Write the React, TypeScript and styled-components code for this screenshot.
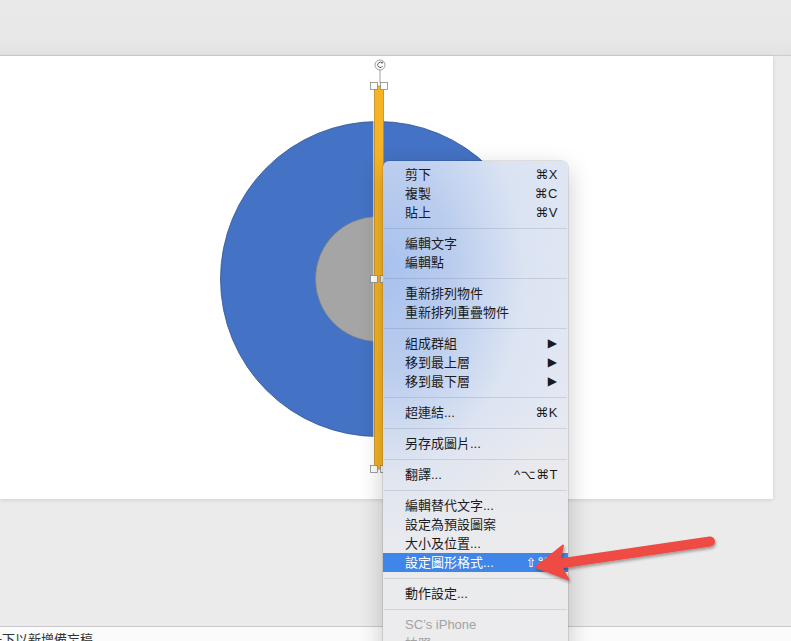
import styled, { createGlobalStyle } from 'styled-components';

const GlobalStyle = createGlobalStyle`
  html, body {
    margin: 0;
    padding: 0;
    width: 791px;
    height: 641px;
    overflow: hidden;
    background: #ebebeb;
    font-family: "Liberation Sans", "Noto Sans CJK TC", sans-serif;
  }
`;

const Page = styled.div`
  position: relative;
  width: 791px;
  height: 641px;
  display: flex;
  flex-direction: column;
  overflow: hidden;
`;

const TopBar = styled.div`
  flex: 0 0 56px;
  box-sizing: border-box;
  background: linear-gradient(180deg, #e9e9e9 0%, #e8e8e8 70%, #e2e2e2 100%);
  border-bottom: 1px solid #cdcdcd;
`;

const Workspace = styled.div`
  flex: 0 0 570px;
  background: #ebebeb;
  display: flex;
  align-items: flex-start;
`;

const Slide = styled.div`
  position: relative;
  width: 773px;
  height: 443px;
  background: #ffffff;
  box-shadow: 0 1px 4px rgba(0, 0, 0, 0.12);
`;

const Canvas = styled.svg`
  position: absolute;
  left: 0;
  top: 0;
  overflow: visible;
`;

const Notes = styled.div`
  flex: 0 0 15px;
  box-sizing: border-box;
  border-top: 1px solid #c9c9c9;
  background: #fbfbfb;
  padding: 5px 0 0;
  font-size: 13px;
  line-height: 16px;
  color: #333;
  margin-left: -24px;
  overflow: hidden;
  white-space: nowrap;
`;

// frosted menu: tint from the blue shape lying under its upper-left part
const Menu = styled.div`
  position: absolute;
  left: 383px;
  top: 161px;
  width: 185px;
  height: 500px;
  box-sizing: border-box;
  padding-top: 4px;
  border-radius: 6px;
  background:
    radial-gradient(ellipse 200px 290px at 0px 110px,
      rgba(168, 193, 237, 1) 0%,
      rgba(182, 202, 238, 0.9) 35%,
      rgba(214, 224, 242, 0.5) 70%,
      rgba(230, 234, 242, 0) 100%),
    linear-gradient(180deg, #dfe6f3 0px, #e3e8f2 240px, #e9eaee 300px, #ececed 100%);
  box-shadow: 0 0 0 0.5px rgba(0, 0, 0, 0.18), 0 8px 24px rgba(0, 0, 0, 0.22);
`;

const Row = styled.div<{ $active?: boolean; $disabled?: boolean }>`
  height: 19px;
  display: flex;
  align-items: center;
  padding: 0 10px 0 22px;
  font-size: 13px;
  line-height: 19px;
  color: ${(p) => (p.$active ? '#ffffff' : p.$disabled ? '#a3a3a3' : '#1b1b1b')};
  background: ${(p) => (p.$active ? '#3f86e8' : 'transparent')};
`;

const Label = styled.span`
  flex: 1;
  white-space: nowrap;
`;

const Shortcut = styled.span`
  font-family: "Liberation Sans", "DejaVu Sans", sans-serif;
  font-size: 13px;
  letter-spacing: 0.5px;
`;

const SubArrow = styled.span`
  font-family: "DejaVu Sans", sans-serif;
  font-size: 12px;
  margin-right: 1px;
`;

const Separator = styled.div`
  height: 12px;
  display: flex;
  align-items: center;
  &::after {
    content: '';
    flex: 1;
    height: 1px;
    margin: 0 1px;
    background: rgba(0, 0, 0, 0.1);
  }
`;

const Overlay = styled.svg`
  position: absolute;
  left: 0;
  top: 0;
  pointer-events: none;
`;

type Item =
  | { sep: true }
  | {
      sep?: false;
      label: string;
      shortcut?: string;
      sub?: boolean;
      active?: boolean;
      disabled?: boolean;
    };

const items: Item[] = [
  { label: '剪下', shortcut: '⌘X' },
  { label: '複製', shortcut: '⌘C' },
  { label: '貼上', shortcut: '⌘V' },
  { sep: true },
  { label: '編輯文字' },
  { label: '編輯點' },
  { sep: true },
  { label: '重新排列物件' },
  { label: '重新排列重疊物件' },
  { sep: true },
  { label: '組成群組', sub: true },
  { label: '移到最上層', sub: true },
  { label: '移到最下層', sub: true },
  { sep: true },
  { label: '超連結...', shortcut: '⌘K' },
  { sep: true },
  { label: '另存成圖片...' },
  { sep: true },
  { label: '翻譯...', shortcut: '^⌥⌘T' },
  { sep: true },
  { label: '編輯替代文字...' },
  { label: '設定為預設圖案' },
  { label: '大小及位置...' },
  { label: '設定圖形格式...', shortcut: '⇧⌘1', active: true },
  { sep: true },
  { label: '動作設定...' },
  { sep: true },
  { label: 'SC’s iPhone', disabled: true },
  { label: '拍照', disabled: true },
];

// slide-local coordinates (slide top is at page y=56)
const cx = 378;
const cy = 223;

const Handle = ({ x, y }: { x: number; y: number }) => (
  <rect x={x - 3.5} y={y - 3.5} width={7} height={7} fill="#fff" stroke="#8a8a8a" strokeWidth={0.8} />
);

function SlideDrawing() {
  return (
    <Canvas width={773} height={443} viewBox="0 0 773 443">
      <circle cx={cx} cy={cy} r={157.5} fill="#4472c4" stroke="#2f528f" strokeWidth={0.8} />
      <circle cx={cx} cy={cy} r={62.5} fill="#a5a5a5" stroke="#7f7f7f" strokeWidth={0.6} />
      <line x1={374} y1={30} x2={374} y2={413} stroke="#ffffff" strokeWidth={1.2} />
      <rect x={374.5} y={30} width={9} height={383} fill="#f6b326" stroke="#bd8a1c" strokeWidth={0.8} />
      <line x1={380} y1={14} x2={380} y2={27} stroke="#8a8a8a" strokeWidth={0.8} />
      <circle cx={380} cy={9} r={5} fill="#fff" stroke="#8a8a8a" strokeWidth={0.8} />
      <path d="M382.2 7.2 A2.6 2.6 0 1 0 382.6 10" fill="none" stroke="#555" strokeWidth={0.9} />
      <path d="M381 6.4 L383 7.4 L382.6 5.3 Z" fill="#555" />
      <Handle x={374} y={30} />
      <Handle x={384} y={30} />
      <Handle x={374} y={223} />
      <Handle x={384} y={223} />
      <Handle x={374} y={413} />
      <Handle x={384} y={413} />
    </Canvas>
  );
}

function ContextMenu() {
  return (
    <Menu>
      {items.map((it, i) =>
        it.sep ? (
          <Separator key={i} />
        ) : (
          <Row key={i} $active={it.active} $disabled={it.disabled}>
            <Label>{it.label}</Label>
            {it.shortcut && <Shortcut>{it.shortcut}</Shortcut>}
            {it.sub && <SubArrow>▶</SubArrow>}
          </Row>
        )
      )}
    </Menu>
  );
}

function RedArrow() {
  return (
    <Overlay width={791} height={641} viewBox="0 0 791 641">
      <defs>
        <filter id="arrowShadow" x="-10%" y="-30%" width="120%" height="160%">
          <feDropShadow dx="1" dy="2" stdDeviation="1.5" floodColor="#000" floodOpacity="0.35" />
        </filter>
      </defs>
      <g filter="url(#arrowShadow)">
        <line x1={710} y1={541.5} x2={560} y2={563.5} stroke="#ee4b44" strokeWidth={10} strokeLinecap="round" />
        <path d="M536 567 L563 545.5 L559 563.5 L568.5 579.5 Z" fill="#ee4b44" stroke="#ee4b44" strokeWidth={2} strokeLinejoin="round" />
      </g>
    </Overlay>
  );
}

export default function App() {
  return (
    <>
      <GlobalStyle />
      <Page>
        <TopBar />
        <Workspace>
          <Slide>
            <SlideDrawing />
          </Slide>
        </Workspace>
        <Notes>按一下以新增備忘稿</Notes>
        <ContextMenu />
        <RedArrow />
      </Page>
    </>
  );
}
